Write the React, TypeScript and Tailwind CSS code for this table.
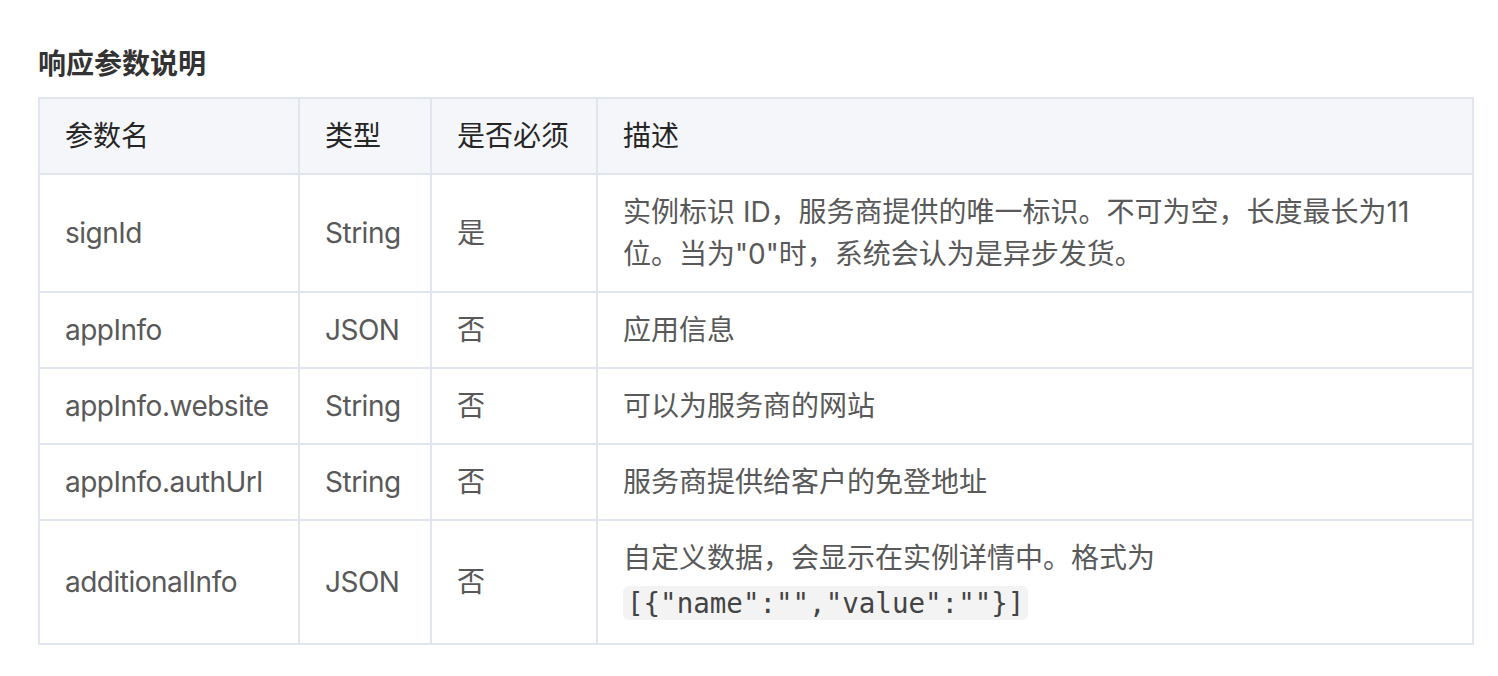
const rows = [
  {
    name: "signId",
    type: "String",
    required: "是",
    desc: <>实例标识 ID，服务商提供的唯一标识。不可为空，长度最长为11位。当为"0"时，系统会认为是异步发货。</>,
  },
  { name: "appInfo", type: "JSON", required: "否", desc: <>应用信息</> },
  { name: "appInfo.website", type: "String", required: "否", desc: <>可以为服务商的网站</> },
  { name: "appInfo.authUrl", type: "String", required: "否", desc: <>服务商提供给客户的免登地址</> },
  {
    name: "additionalInfo",
    type: "JSON",
    required: "否",
    desc: (
      <>
        自定义数据，会显示在实例详情中。格式为
        <br />
        <code className="inline-block rounded-md bg-[#f3f3f3] px-[4px] leading-[34px] my-[7px] font-['DejaVu_Sans_Mono',monospace] text-[27.5px] text-[#444]">
          {'[{"name":"","value":""}]'}
        </code>
      </>
    ),
  },
];

const App = () => {
  return (
    <div className="min-h-screen bg-white px-[38px] pt-[43px] font-['Inter','Noto_Sans_CJK_SC',sans-serif] text-[28px]">
      <h3 className="text-[28px] leading-[42px] font-bold text-[#333]">响应参数说明</h3>

      <table className="mt-[12px] w-[1436px] table-fixed border-collapse">
        <colgroup>
          <col className="w-[260px]" />
          <col className="w-[132px]" />
          <col className="w-[166px]" />
          <col />
        </colgroup>
        <thead>
          <tr className="bg-[#f5f6fa] text-[#262626]">
            <th className="border-2 border-[#e1e5ef] px-[25px] py-4 text-left font-normal leading-[42px]">参数名</th>
            <th className="border-2 border-[#e1e5ef] px-[25px] py-4 text-left font-normal leading-[42px]">类型</th>
            <th className="border-2 border-[#e1e5ef] px-[25px] py-4 text-left font-normal leading-[42px]">是否必须</th>
            <th className="border-2 border-[#e1e5ef] px-[25px] py-4 text-left font-normal leading-[42px]">描述</th>
          </tr>
        </thead>
        <tbody className="text-[#595959]">
          {rows.map((r) => (
            <tr key={r.name}>
              <td className="border-2 border-[#e1e5ef] px-[25px] py-4 leading-[42px] tracking-[-0.5px]">{r.name}</td>
              <td className="border-2 border-[#e1e5ef] px-[25px] py-4 leading-[42px] tracking-[-0.5px]">{r.type}</td>
              <td className="border-2 border-[#e1e5ef] px-[25px] py-4 leading-[42px]">{r.required}</td>
              <td className="border-2 border-[#e1e5ef] px-[25px] py-4 leading-[42px] pr-[60px]">{r.desc}</td>
            </tr>
          ))}
        </tbody>
      </table>
    </div>
  );
};

export default App;
